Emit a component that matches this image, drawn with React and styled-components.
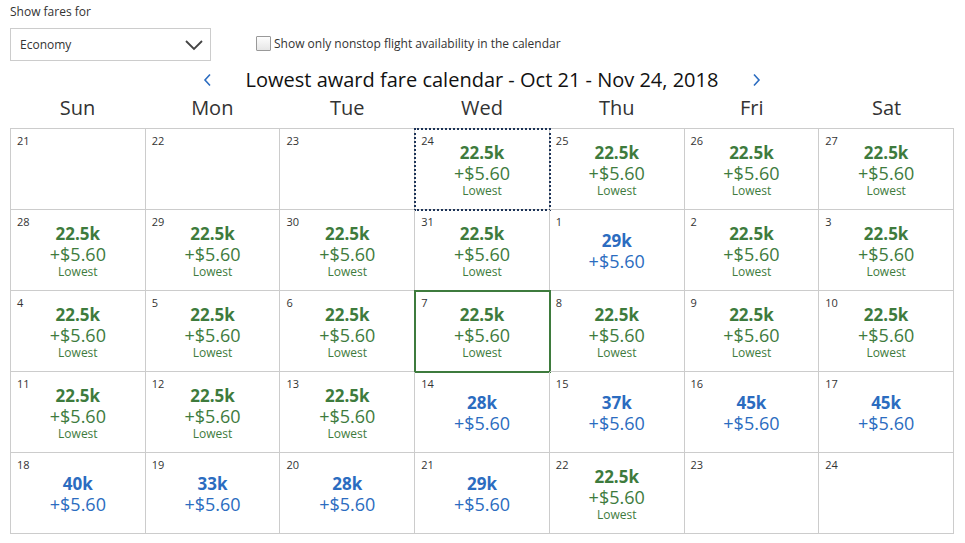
import React from 'react';
import styled, { createGlobalStyle } from 'styled-components';

const GlobalStyle = createGlobalStyle`
  body {
    margin: 0;
    background: #fff;
    font-family: "Open Sans", "Liberation Sans", sans-serif;
    color: #333;
  }
`;

const Page = styled.div`
  width: 965px;
  padding: 3px 11px 0 10px;
  box-sizing: border-box;
`;

const Label = styled.div`
  font-size: 12px;
  line-height: 18px;
  color: #333;
`;

const Controls = styled.div`
  display: flex;
  align-items: center;
  margin-top: 7px;
`;

const Select = styled.div`
  width: 201px;
  height: 33px;
  box-sizing: border-box;
  border: 1px solid #ccc;
  display: flex;
  align-items: center;
  justify-content: space-between;
  padding: 0 7px 0 9px;
  font-size: 12px;
  color: #333;
`;

const CheckRow = styled.label`
  display: flex;
  align-items: center;
  margin-left: 45px;
  margin-top: -2px;
  font-size: 12px;
  color: #333;
  gap: 3px;
`;

const Box = styled.span`
  width: 13px;
  height: 13px;
  border: 1px solid #999;
  border-radius: 1px;
  background: linear-gradient(#fdfdfd, #e6e6e6);
`;

const TitleRow = styled.div`
  display: flex;
  align-items: center;
  justify-content: center;
  gap: 33px;
  margin-top: 6px;
  height: 26px;
`;

const Title = styled.h1`
  margin: 0;
  font-size: 20px;
  font-weight: 400;
  color: #111;
  line-height: 26px;
`;

const Arrow = styled.span`
  display: flex;
  align-items: center;
  cursor: pointer;
`;

const Weekdays = styled.div`
  display: grid;
  grid-template-columns: repeat(7, 1fr);
  width: 944px;
  height: 35px;
  align-items: center;
`;

const Weekday = styled.div`
  text-align: center;
  font-size: 20px;
  color: #333;
  line-height: 26px;
  margin-top: -5px;
`;

const Grid = styled.div`
  display: grid;
  grid-template-columns: repeat(7, 1fr);
  grid-auto-rows: 81px;
  border-top: 1px solid #ccc;
  border-left: 1px solid #ccc;
  width: 944px;
  box-sizing: border-box;
`;

const Cell = styled.div`
  position: relative;
  border-right: 1px solid #ccc;
  border-bottom: 1px solid #ccc;
  display: flex;
  flex-direction: column;
  align-items: center;
  justify-content: center;
  padding-top: 1px;
  outline: ${p => (p.$mark === 'focus' ? '2px dotted #1c3358' : p.$mark === 'selected' ? '2px solid #3e7b3d' : 'none')};
  outline-offset: -1px;
`;

const DateNum = styled.span`
  position: absolute;
  top: 4px;
  left: 6px;
  font-size: 11px;
  color: #333;
`;

const Miles = styled.div`
  font-size: 17px;
  font-weight: 700;
  line-height: 21px;
  color: ${p => (p.$low ? '#3e7b3d' : '#2b6cc0')};
`;

const Tax = styled.div`
  font-size: 18px;
  line-height: 21px;
  color: ${p => (p.$low ? '#3e7b3d' : '#2b6cc0')};
`;

const Note = styled.div`
  font-size: 12px;
  line-height: 14px;
  color: #3e7b3d;
`;

const Chevron = ({ dir }) => (
  <svg width="10" height="14" viewBox="0 0 10 14">
    <polyline
      points={dir === 'left' ? '7,1.5 2,7 7,12.5' : '3,1.5 8,7 3,12.5'}
      fill="none"
      stroke="#2b6cc0"
      strokeWidth="1.6"
    />
  </svg>
);

const days = ['Sun', 'Mon', 'Tue', 'Wed', 'Thu', 'Fri', 'Sat'];

const L = '22.5k';
const cells = [
  [21], [22], [23], [24, L, 'focus'], [25, L], [26, L], [27, L],
  [28, L], [29, L], [30, L], [31, L], [1, '29k'], [2, L], [3, L],
  [4, L], [5, L], [6, L], [7, L, 'selected'], [8, L], [9, L], [10, L],
  [11, L], [12, L], [13, L], [14, '28k'], [15, '37k'], [16, '45k'], [17, '45k'],
  [18, '40k'], [19, '33k'], [20, '28k'], [21, '29k'], [22, L], [23], [24],
];

export default function App() {
  return (
    <Page>
      <GlobalStyle />
      <Label>Show fares for</Label>
      <Controls>
        <Select>
          <span>Economy</span>
          <svg width="18" height="12" viewBox="0 0 18 12">
            <polyline points="1,2 9,10 17,2" fill="none" stroke="#444" strokeWidth="1.8" />
          </svg>
        </Select>
        <CheckRow>
          <Box />
          Show only nonstop flight availability in the calendar
        </CheckRow>
      </Controls>
      <TitleRow>
        <Arrow><Chevron dir="left" /></Arrow>
        <Title>Lowest award fare calendar - Oct 21 - Nov 24, 2018</Title>
        <Arrow><Chevron dir="right" /></Arrow>
      </TitleRow>
      <Weekdays>
        {days.map(d => <Weekday key={d}>{d}</Weekday>)}
      </Weekdays>
      <Grid>
        {cells.map(([n, miles, mark], i) => {
          const low = miles === L;
          return (
            <Cell key={i} $mark={mark}>
              <DateNum>{n}</DateNum>
              {miles && <Miles $low={low}>{miles}</Miles>}
              {miles && <Tax $low={low}>+$5.60</Tax>}
              {low && <Note>Lowest</Note>}
            </Cell>
          );
        })}
      </Grid>
    </Page>
  );
}
